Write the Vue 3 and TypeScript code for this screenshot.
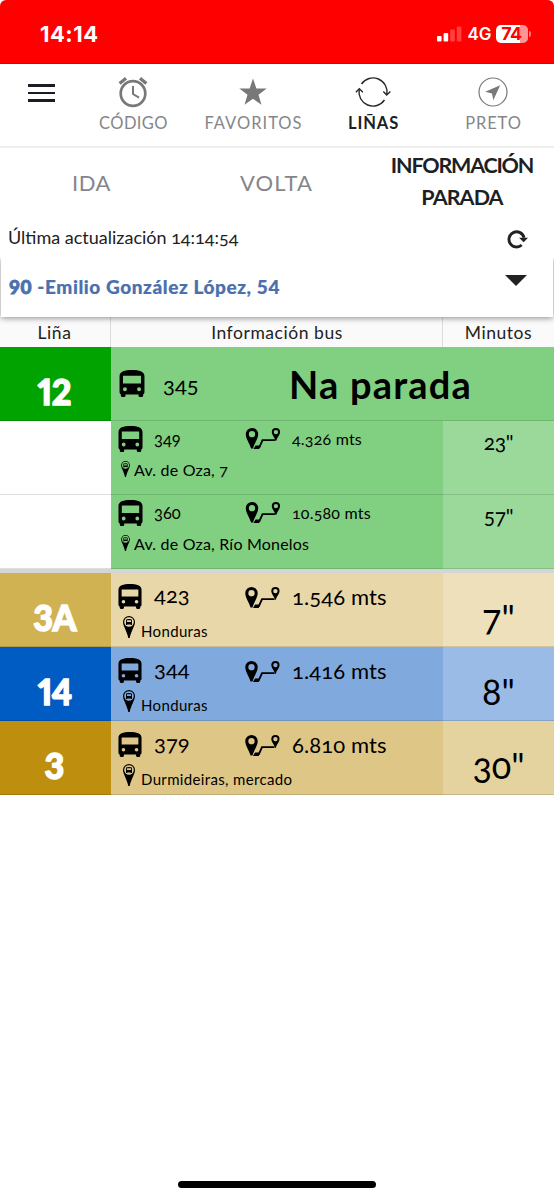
<script setup lang="ts">
import { ref } from 'vue'

interface Arrival {
  line?: string
  kind: 'here' | 'next' | 'normal'
  tone: string
  bus: string
  distance?: string
  place?: string
  minutes?: string
}

const tabs = ['IDA', 'VOLTA']
const arrivals = ref<Arrival[]>([
  { line: '12', kind: 'here', tone: 'green', bus: '345' },
  { kind: 'next', tone: 'green', bus: '349', distance: '4.326 mts', place: 'Av. de Oza, 7', minutes: '23"' },
  { kind: 'next', tone: 'green', bus: '360', distance: '10.580 mts', place: 'Av. de Oza, Río Monelos', minutes: '57"' },
  { line: '3A', kind: 'normal', tone: 'sand', bus: '423', distance: '1.546 mts', place: 'Honduras', minutes: '7"' },
  { line: '14', kind: 'normal', tone: 'blue', bus: '344', distance: '1.416 mts', place: 'Honduras', minutes: '8"' },
  { line: '3', kind: 'normal', tone: 'gold', bus: '379', distance: '6.810 mts', place: 'Durmideiras, mercado', minutes: '30"' },
])
</script>

<template>
  <main class="phone">
    <header class="status">
      <span class="clock">14:14</span>
      <div class="indicators">
        <svg class="signal" width="25" height="16" viewBox="0 0 25 16" fill="#fff">
          <rect x="0" y="10" width="4.6" height="5.5" rx="1" />
          <rect x="6.6" y="7" width="4.6" height="8.5" rx="1" />
          <rect x="13.2" y="3.5" width="4.6" height="12" rx="1" opacity=".25" />
          <rect x="19.8" y="0.5" width="4.6" height="15" rx="1" opacity=".25" />
        </svg>
        <span class="net">4G</span>
        <span class="battery">74</span>
        <span class="cap"></span>
      </div>
    </header>

    <nav class="nav">
      <button class="burger" aria-label="Menu"><i></i><i></i><i></i></button>
      <a class="item">
        <svg width="32" height="32" viewBox="0 0 32 32" fill="none" stroke="#77787a">
          <circle cx="16" cy="17.5" r="12.3" stroke-width="2.7" />
          <path d="M16 10v8l6 3.6" stroke-width="2" />
          <path d="M2.6 7.6 9 2.3M29.4 7.6 23 2.3" stroke-width="3.2" />
        </svg>
        <span class="t-codigo">CÓDIGO</span>
      </a>
      <a class="item">
        <svg width="32" height="32" viewBox="0 0 32 32" fill="#77787a">
          <path d="M16 2.500l3.400 9.900 10.300.2-8.200 6.200 3 10-8.500-6-8.500 6 3-10-8.200-6.200 10.300-.2z" />
        </svg>
        <span class="t-fav">FAVORITOS</span>
      </a>
      <a class="item active">
        <svg width="36" height="32" viewBox="0 0 36 32" fill="none" stroke="#26282c" stroke-width="1.4">
          <path d="M6.500 8A14 14 0 0 1 31.800 18.500" />
          <path d="M29.500 24A14 14 0 0 1 4.200 13.500" />
          <path d="M28.300 15.500 31.700 19 35.300 15.500M.9 16.200 4.300 12.700 7.900 16.200" />
        </svg>
        <span class="t-linas">LIÑAS</span>
      </a>
      <a class="item">
        <svg width="32" height="32" viewBox="0 0 32 32">
          <circle cx="16" cy="16" r="14" fill="none" stroke="#77787a" stroke-width="1.2" />
          <path d="M23.200 9.200 8.200 15.800 15 17.400 16.300 24.200z" fill="#77787a" />
        </svg>
        <span class="t-preto">PRETO</span>
      </a>
    </nav>

    <nav class="tabs">
      <a v-for="t in tabs" :key="t" class="tab" :class="t.toLowerCase()">{{ t }}</a>
      <a class="tab current"><span class="l1">INFORMACIÓN</span><span class="l2">PARADA</span></a>
    </nav>

    <div class="update">
      <span>Última actualización 14:14:54</span>
      <svg width="22" height="20" viewBox="0 0 22 20">
        <path d="M15.700 16A7.600 7.600 0 1 1 18 8.700" fill="none" stroke="#222" stroke-width="2.900" />
        <path d="M13 8.700H22L17.700 13.200z" fill="#222" />
      </svg>
    </div>

    <section class="select">
      <span class="stop"><b>90</b> -Emilio González López, 54</span>
      <i class="caret"></i>
    </section>

    <div class="row head">
      <span>Liña</span><span class="mid">Información bus</span><span class="mins">Minutos</span>
    </div>

    <section class="table">
      <article v-for="a in arrivals" :key="a.bus" class="row arrival" :class="[a.kind, a.tone]">
        <div class="line" :class="{ blank: !a.line }"><span>{{ a.line }}</span></div>
        <div class="info">
          <div class="top">
            <svg class="bus" viewBox="0 0 24 26">
              <path fill-rule="evenodd" d="M0 6C0 1.500 5 0 12 0s12 1.500 12 6v15.500q0 1.500-1.300 2v1.300q0 1.200-1.200 1.200h-2q-1.200 0-1.200-1.200v-1.300H5.700v1.300q0 1.200-1.200 1.200h-2q-1.200 0-1.200-1.200v-1.300Q0 23 0 21.500zM3.300 5.600v7.400h17.400V5.600zM5.200 16.600a1.900 1.900 0 1 0 0 3.800 1.900 1.900 0 0 0 0-3.800zM18.800 16.600a1.900 1.900 0 1 0 0 3.800 1.900 1.900 0 0 0 0-3.800z" />
            </svg>
            <span class="num">{{ a.bus }}</span>
            <strong v-if="a.kind === 'here'">Na parada</strong>
            <template v-else>
              <svg class="route" viewBox="0 0 36 23">
                <path fill-rule="evenodd" d="M6.500 0a6.500 6.500 0 0 1 6.500 6.500C13 11 9.500 15 7.500 21.500H5.500C3.500 15 0 11 0 6.500A6.500 6.500 0 0 1 6.500 0zm0 3.200a3.300 3.300 0 1 0 0 6.600 3.300 3.300 0 0 0 0-6.600z" />
                <path d="M14 20.500 17.500 12.700H30.500" fill="none" stroke="#000" stroke-width="2" />
                <path d="M8 22 10.200 18.300H15.500L14 22z" />
                <path fill-rule="evenodd" d="M31.500 0a4.300 4.300 0 0 1 4.300 4.300c0 3-2.700 5-3.800 9h-1c-1.100-4-3.800-6-3.800-9A4.300 4.300 0 0 1 31.500 0zm0 2a2.300 2.300 0 1 0 0 4.600 2.300 2.300 0 0 0 0-4.600z" />
              </svg>
              <span class="dist">{{ a.distance }}</span>
            </template>
          </div>
          <div v-if="a.place" class="bottom">
            <svg class="pin" viewBox="0 0 12 22">
              <path d="M0 6a6 6 0 0 1 12 0c0 4-3.700 8.500-5.300 16h-1.400C3.700 14.500 0 10 0 6z" />
              <circle class="hole" cx="6" cy="6" r="4.800" />
              <path fill-rule="evenodd" d="M3 4Q3 3 6 3t3 1v5H7.800v-.6H4.200V9H3zM3.900 4.300v1.800h4.200V4.300z" />
            </svg>
            <span class="place">{{ a.place }}</span>
          </div>
        </div>
        <div v-if="a.minutes" class="minutes">{{ a.minutes }}</div>
      </article>
    </section>
    <div class="home"></div>
  </main>
</template>

<style>
body { margin: 0; background: #fff; }
</style>

<style scoped>
.phone { width: 554px; height: 1200px; display: flex; flex-direction: column; overflow: hidden; background: #fff; color: #222; font-family: Lato, "Open Sans", sans-serif; font-variant-numeric: oldstyle-nums; position: relative; }
.phone * { box-sizing: border-box; }
svg { display: block; flex: none; }
.status { height: 64px; flex: none; background: #f00; border-bottom: 1px solid #e00000; border-radius: 6px 6px 0 0; color: #fff; display: flex; justify-content: space-between; padding: 4px 23px 0 40px; align-items: center; font-family: Inter, sans-serif; }
.clock { font-size: 22px; font-weight: 700; letter-spacing: .5px; font-variant-numeric: lining-nums; }
.indicators { display: flex; align-items: center; }
.net { font-size: 17px; font-weight: 600; margin-left: 6px; width: 28px; }
.battery { width: 32px; height: 18px; border-radius: 5px; background: linear-gradient(90deg, #fff 75%, #ff9494 75%); color: #f00; font-size: 18px; font-weight: 700; line-height: 18px; text-align: center; letter-spacing: -.5px; }
.cap { width: 2px; height: 6px; margin-left: 1.500px; background: #ff8080; border-radius: 0 3px 3px 0; }
.nav { height: 84px; flex: none; border-bottom: 2px solid #eee; display: grid; grid-template-columns: 73px repeat(4, 120px); }
.burger { border: 0; background: none; padding: 20px 0 0 28px; display: flex; flex-direction: column; gap: 5px; }
.burger i { width: 27px; height: 2.600px; background: #1a1d25; }
.item { display: flex; flex-direction: column; align-items: center; padding-top: 12px; font-size: 16.500px; line-height: 20px; color: #858689; }
.item span { margin-top: 5px; letter-spacing: .9px; margin-right: -1px; }
.item .t-codigo { letter-spacing: .4px; }
.item .t-fav { letter-spacing: 1px; }
.active { color: #1d1f24; font-weight: 700; }
.tabs { height: 66px; flex: none; display: grid; grid-template-columns: 183px 187px 184px; }
.tab { font-size: 22px; text-align: center; line-height: 32px; padding-top: 19px; color: #85868a; letter-spacing: .6px; }
.tab.volta { letter-spacing: 1.100px; }
.tab.current { display: flex; flex-direction: column; padding-top: 1px; font-size: 21.500px; font-weight: 700; color: #1d1f24; letter-spacing: -1.200px; }
.tab .l2 { letter-spacing: -.9px; }
.update { height: 44px; flex: none; display: flex; justify-content: space-between; align-items: center; padding: 6px 26px 0 8px; font-size: 18px; }
.update span { margin-top: -5px; }
.select { height: 59px; flex: none; margin: 0 1px; background: #fff; box-shadow: 0 1px 6px rgba(0,0,0,.45); display: flex; justify-content: space-between; padding: 0 26px 0 8px; position: relative; z-index: 1; clip-path: inset(0 -1px -12px); }
.stop { color: #4a70ad; font-size: 19px; font-weight: 900; line-height: 58px; font-variant-numeric: lining-nums; letter-spacing: .58px; -webkit-text-stroke: .2px #4a70ad; }
.stop b { font-weight: 900; -webkit-text-stroke: .8px #4a70ad; }
.caret { margin-top: 17px; width: 0; height: 0; border: 11px solid transparent; border-top-color: #222; border-bottom: 0; align-self: flex-start; }
.row { display: grid; grid-template-columns: 111px 332px 111px; flex: none; }
.head { height: 30px; background: #fafafa; font-size: 17.500px; line-height: 31px; text-align: center; letter-spacing: .55px; }
.head span:first-child { padding-right: 2px; }
.head span + span { border-left: 1px solid #ddd; margin-left: -1px; }
.arrival { height: 74px; color: #000; position: relative; }
.arrival::after { content: ""; position: absolute; inset: auto 0 0; height: 1px; background: rgba(0,0,0,.13); }
.line { background: var(--strong); color: #fff; display: flex; justify-content: center; padding: 14px 2px 0 0; font-weight: 900; font-size: 36px; line-height: 60px; letter-spacing: -.5px; -webkit-text-stroke: 1.400px #fff; font-variant-numeric: lining-nums proportional-nums; }
.line span { transform: scaleX(.95); }
.line.blank { background: #fff; }
.info { background: var(--soft); padding-left: 7px; height: 74px; }
.here .info { grid-column: 2 / 4; }
.minutes { background: var(--pale); height: 74px; text-align: center; }
.green { --strong: #00a300; --soft: #81d081; --pale: #9bd99b; }
.sand { --strong: #d1b252; --soft: #e8d8a9; --pale: #ede0ba; }
.blue { --strong: #005bc2; --soft: #80aade; --pale: #99bbe5; }
.gold { --strong: #be8f0e; --soft: #dec786; --pale: #e5d39f; }
.top { display: flex; }
.normal .top { height: 46px; }
.next .top { height: 39px; }
.bus { width: 24px; height: 25px; margin-top: 11px; }
.here .bus { width: 26px; height: 27px; margin: 23px 0 0 1px; }
.next .bus { width: 25px; height: 26px; margin-top: 5px; }
.num { width: 91px; margin-left: 12px; line-height: 40px; font-size: 22px; margin-top: 2px; }
.next .num { font-size: 16.500px; margin: -2px 0 0 11px; }
.here .num { margin: 18px 0 0 18px; width: 126px; }
strong { font-size: 38px; line-height: 40px; margin-top: 17px; letter-spacing: 1.200px; }
.route { width: 35px; height: 22px; margin-top: 14px; }
.next .route { margin-top: 7px; width: 36px; }
.dist { margin-left: 12px; font-size: 22px; line-height: 40px; margin-top: 4px; letter-spacing: .1px; }
.next .dist { font-size: 16px; margin: -2px 0 0 11px; letter-spacing: .2px; }
.bottom { display: flex; font-size: 15px; line-height: 20px; letter-spacing: .35px; }
.place { margin-top: 2px; }
.pin { width: 12px; height: 22px; margin: -3px 6px 0 5px; }
.hole { fill: var(--soft); }
.next .bottom { font-size: 16px; letter-spacing: .2px; }
.next .place { margin-top: 0; }
.next .pin { width: 9px; height: 16px; margin: 1px 4px 0 3px; }
.normal .minutes { font-size: 36px; line-height: 89px; }
.next .minutes { font-size: 21px; line-height: 42px; letter-spacing: -.3px; }
.next + .normal { border-top: 4px solid #d5d5d5; height: 78px; }
.home { position: absolute; left: 178px; top: 1181px; width: 198px; height: 7px; border-radius: 4px; background: #000; }
</style>
